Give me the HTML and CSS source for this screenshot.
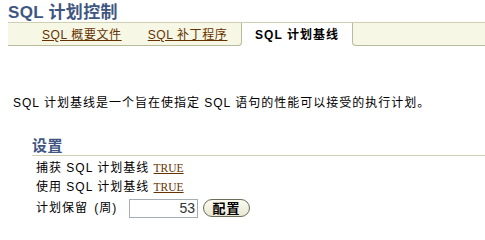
FILE: index.html
```html
<!DOCTYPE html>
<html lang="zh-CN">
<head>
<meta charset="utf-8">
<title>SQL 计划控制</title>
<link rel="stylesheet" href="styles.css">
</head>
<body>
<h1 class="title">SQL 计划控制</h1>
<div class="tabbar">
  <div class="tabs-left">
    <a class="tab-link" href="#">SQL 概要文件</a>
    <a class="tab-link" href="#">SQL 补丁程序</a>
  </div>
  <div class="tab-sel">SQL 计划基线</div>
  <div class="tabs-right"></div>
</div>
<p class="desc">SQL 计划基线是一个旨在使指定 SQL 语句的性能可以接受的执行计划。</p>
<section class="settings">
  <h2 class="sub">设置</h2>
  <div class="row">捕获 SQL 计划基线 <a class="val" href="#">TRUE</a></div>
  <div class="row">使用 SQL 计划基线 <a class="val" href="#">TRUE</a></div>
  <div class="row form">
    <span class="lbl">计划保留 (周)</span>
    <input class="num" type="text" value="53">
    <button class="btn" type="button">配置</button>
  </div>
</section>
</body>
</html>
```
FILE: styles.css
```css
html, body {
  margin: 0;
  padding: 0;
  background: #ffffff;
}
body {
  font-family: "Liberation Sans", "Noto Sans CJK SC", sans-serif;
  font-size: 12px;
  letter-spacing: 1px;
  color: #000000;
}
.title {
  margin: 0;
  padding: 3px 0 0 8px;
  height: 19px;
  font-size: 17px;
  line-height: 19px;
  font-weight: bold;
  letter-spacing: 0.3px;
  color: #3f5682;
}
.tabbar {
  margin-left: 8px;
  display: flex;
  border-top: 1px solid #cfcfb4;
  box-sizing: border-box;
  height: 24px;
}
.tabs-left {
  flex: none;
  width: 234px;
  box-sizing: border-box;
  display: flex;
  gap: 26px;
  padding: 6px 0 0 34px;
  background: #f7f7e6;
  border-right: 1px solid #b9b99c;
  border-bottom: 1px solid #b9b99c;
  border-bottom-right-radius: 4px;
}
.tab-link {
  color: #663300;
  text-decoration: underline;
  letter-spacing: 0.6px;
  line-height: 13px;
  white-space: nowrap;
}
.tab-sel {
  flex: none;
  width: 110px;
  text-align: center;
  font-weight: bold;
  padding-top: 6px;
  line-height: 13px;
  box-sizing: border-box;
  background: #ffffff;
  white-space: nowrap;
}
.tabs-right {
  flex: 1;
  background: #f7f7e6;
  border-left: 1px solid #b9b99c;
  border-bottom: 1px solid #b9b99c;
  border-bottom-left-radius: 4px;
}
.desc {
  margin: 50px 0 0 13px;
  line-height: 14px;
  white-space: nowrap;
}
.settings {
  margin: 27px 0 0 32px;
}
.sub {
  margin: 0;
  font-size: 15px;
  line-height: 17px;
  height: 17px;
  font-weight: bold;
  letter-spacing: 0.5px;
  color: #3f5682;
  border-bottom: 1px solid #cfcfb4;
  padding-bottom: 1px;
}
.row {
  margin-left: 4px;
  height: 19px;
  line-height: 19px;
}
.row:nth-of-type(1) {
  margin-top: 3px;
}
.val {
  font-family: "Liberation Serif", serif;
  font-size: 11.5px;
  letter-spacing: 0;
  color: #663300;
}
.form {
  display: flex;
  align-items: center;
  gap: 5px;
  margin-top: 0;
  height: 22px;
}
.lbl {
  flex: none;
  width: 87px;
  word-spacing: 2px;
  white-space: nowrap;
}
.num {
  width: 69px;
  height: 19px;
  box-sizing: border-box;
  border: 1px solid #a5acb2;
  text-align: right;
  font-family: "Liberation Sans", sans-serif;
  font-size: 14px;
  letter-spacing: 0;
  color: #333333;
  padding: 0 2px;
  margin: 0 0 0 1px;
}
.btn {
  margin: 0;
  width: 47px;
  height: 18px;
  box-sizing: border-box;
  border: 1px solid #6b6b5a;
  border-radius: 9px;
  background: linear-gradient(#fbfbf1, #e8e8d2);
  font-family: "Noto Sans CJK SC", sans-serif;
  font-size: 13px;
  font-weight: bold;
  letter-spacing: 1px;
  line-height: 14px;
  padding: 0;
  color: #000000;
}
```
